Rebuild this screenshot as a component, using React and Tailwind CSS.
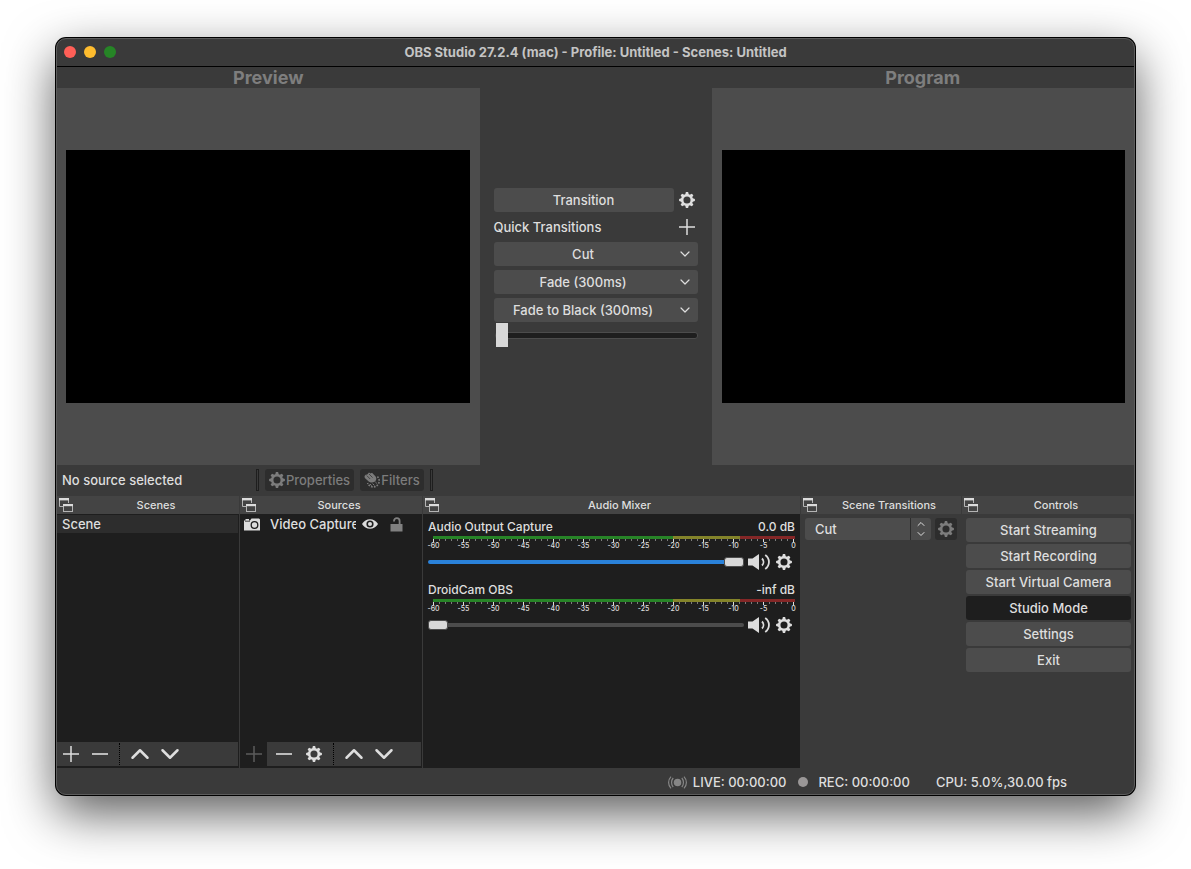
import { useState } from "react";
import { ChevronDown, ChevronUp } from "lucide-react";

const TEETH = [0, 45, 90, 135, 180, 225, 270, 315];
const TICKS = Array.from({ length: 61 }, (_, i) => i);
const DB_LABELS = ["-60", "-55", "-50", "-45", "-40", "-35", "-30", "-25", "-20", "-15", "-10", "-5", "0"];
const CONTROLS = ["Start Streaming", "Start Recording", "Start Virtual Camera", "Studio Mode", "Settings", "Exit"];

/* ICONS */
function GearIcon() {
  return (
    <svg width="16" height="16" viewBox="0 0 16 16" className="shrink-0" aria-hidden="true">
      <circle cx="8" cy="8" r="4.8" fill="none" stroke="currentColor" strokeWidth="2.5" />
      {TEETH.map((a) => (
        <path key={a} d="M6.1 3 L6.9 0.1 H9.1 L9.9 3 Z" fill="currentColor" transform={`rotate(${a} 8 8)`} />
      ))}
    </svg>
  );
}

function PlusIcon() {
  return (
    <svg width="16" height="16" viewBox="0 0 16 16" className="shrink-0" aria-hidden="true">
      <path d="M0 8 H16 M8 0 V16" stroke="currentColor" strokeWidth="1.5" />
    </svg>
  );
}

function MinusIcon() {
  return (
    <svg width="16" height="16" viewBox="0 0 16 16" className="shrink-0" aria-hidden="true">
      <path d="M0 8 H16" stroke="currentColor" strokeWidth="1.6" />
    </svg>
  );
}

function DockIcon() {
  return (
    <svg width="14" height="14" viewBox="0 0 14 14" className="shrink-0" aria-hidden="true">
      <path d="M0.5 1 V8.5 H4 M9.5 1 V5" fill="none" stroke="#b4b4b4" />
      <rect x="0" y="0" width="10" height="2.4" fill="#dcdcdc" />
      <rect x="4.5" y="6.5" width="9" height="7" fill="#444444" stroke="#b4b4b4" />
      <rect x="4" y="6" width="10" height="2.2" fill="#dcdcdc" />
    </svg>
  );
}

function FilterIcon() {
  return (
    <svg width="16" height="16" viewBox="0 0 16 16" className="shrink-0" aria-hidden="true">
      <path
        d="M0.5 4 L2 2.4 L3 2.8 L5 0.4 L6.6 1.6 L8 0.8 L11.4 4.2 C13 6 12.4 8.8 10.4 9.8 C8.2 11 5.8 10.6 4.2 9 L0.8 6 Z"
        fill="currentColor"
      />
      <path d="M2.8 3.6 L6.2 7 M5 2 L8.6 5.6" stroke="#2d2d2d" strokeWidth="0.7" />
      <path
        d="M13.4 4.6 A6 6 0 1 1 3.6 11"
        fill="none"
        stroke="currentColor"
        strokeWidth="1.6"
        strokeDasharray="1.7 1.2"
      />
      <path d="M6 12 L7.6 13.6 M8.6 11.6 L10.4 13.4 M11.4 10 L12.8 11.4" stroke="currentColor" strokeWidth="1" />
    </svg>
  );
}

function CameraIcon() {
  return (
    <svg width="16" height="13" viewBox="0 0 16 13" className="shrink-0" aria-hidden="true">
      <path d="M0 2.5 H1.5 V1 H5 V2.5 H6 L7.5 0.5 H15 L16 1.5 V12.5 H0 Z" fill="#dcdcdc" />
      <path d="M1 3.2 H6" stroke="#1e1e1e" strokeWidth="0.8" />
      <circle cx="10.5" cy="7" r="3.3" fill="none" stroke="#1e1e1e" strokeWidth="1.3" />
    </svg>
  );
}

function EyeIcon() {
  return (
    <svg width="16" height="12" viewBox="0 0 16 12" aria-hidden="true">
      <path d="M0 6 C3.5 -0.4 12.5 -0.4 16 6 C12.5 12.4 3.5 12.4 0 6 Z" fill="#dcdcdc" />
      <circle cx="8" cy="6" r="3.6" fill="#1e1e1e" />
      <circle cx="8" cy="6" r="2" fill="#dcdcdc" />
    </svg>
  );
}

function UnlockIcon() {
  return (
    <svg width="13" height="15" viewBox="0 0 13 15" aria-hidden="true">
      <path d="M4 4.5 V4 C4 0.2 9.6 0.2 9.6 4 V8" fill="none" stroke="#808080" strokeWidth="1.8" />
      <rect x="0.5" y="7" width="12" height="7.5" fill="#808080" />
    </svg>
  );
}

function SpeakerIcon() {
  return (
    <svg width="22" height="16" viewBox="0 0 22 16" aria-hidden="true">
      <path d="M0 4.5 H4.5 L11 0 V16 L4.5 11.5 H0 Z" fill="#dcdcdc" />
      <path d="M14 4.5 C16 6.5 16 9.5 14 11.5" fill="none" stroke="#dcdcdc" strokeWidth="1.8" />
      <path d="M17.2 1 C22.2 4.6 22.2 11.4 17.2 15" fill="none" stroke="#dcdcdc" strokeWidth="1.8" />
    </svg>
  );
}

function LiveIcon() {
  return (
    <svg width="19" height="13" viewBox="0 0 19 13" fill="none" stroke="#868686" strokeWidth="1.2" aria-hidden="true">
      <circle cx="9.5" cy="6.5" r="3.2" fill="#868686" />
      <path d="M5.2 2 C3 4.5 3 8.5 5.2 11 M13.8 2 C16 4.5 16 8.5 13.8 11" />
      <path d="M3 0.6 C-0.2 4 -0.2 9 3 12.4 M16 0.6 C19.2 4 19.2 9 16 12.4" />
    </svg>
  );
}

/* PARTS */
function Dock({ title, className = "", children }) {
  return (
    <section className={`flex min-w-0 flex-col ${className}`}>
      <header className="flex h-[18px] items-center bg-[#444444] pl-0.5 text-[11px] leading-4 font-medium">
        <DockIcon />
        <h2 className="flex-1 text-center">{title}</h2>
      </header>
      {children}
    </section>
  );
}

function ToolButton({ label, className = "w-[30px]", children, ...rest }) {
  return (
    <button aria-label={label} className={`flex h-6 items-center justify-center ${className}`} {...rest}>
      {children}
    </button>
  );
}

function ToolDivider() {
  return <span className="my-px mr-[5px] ml-1 w-px self-stretch border-l border-dotted border-black" />;
}

function QuickTransition({ name }) {
  return (
    <button className="flex h-6 items-center rounded-[3px] bg-[#4c4c4c] pr-[5px]">
      <span className="flex-1 pr-1 text-center">{name}</span>
      <ChevronDown size={16} strokeWidth={1.8} />
    </button>
  );
}

function MixerChannel({ name, level, initial }) {
  const [volume, setVolume] = useState(initial);

  return (
    <div className="flex flex-col">
      <div className="flex h-[22px] items-center justify-between pt-[3px] text-[12px]">
        <span>{name}</span>
        <span>{level}</span>
      </div>

      {/* METER */}
      <div className="ml-[5px]">
        <div className="flex h-[3px]">
          <div className="flex-[240] bg-[#278427]" />
          <div className="flex-[67] bg-[#84842a]" />
          <div className="flex-[55] bg-[#842727]" />
        </div>
        <div className="mr-px flex h-[3px] items-start justify-between">
          {TICKS.map((t) => (
            <span key={t} className={t % 5 === 0 ? "h-[3px] w-px bg-[#dcdcdc]" : "h-0.5 w-px bg-[#7c7c7c]"} />
          ))}
        </div>
        <div className="mr-px flex h-1.5 items-center justify-between text-[7px] leading-none">
          {DB_LABELS.map((l) => (
            <span key={l} className="flex w-px justify-center">
              <span>{l}</span>
            </span>
          ))}
        </div>
      </div>

      <div className="mb-0.5 flex h-[27px] items-center">
        <input
          type="range"
          min="0"
          max="100"
          value={volume}
          onChange={(e) => setVolume(Number(e.target.value))}
          aria-label={`${name} volume`}
          className="h-4 min-w-0 flex-1 appearance-none bg-transparent [&::-webkit-slider-runnable-track]:h-1 [&::-webkit-slider-runnable-track]:rounded-sm [&::-webkit-slider-runnable-track]:bg-[linear-gradient(to_right,#2a82da_var(--fill),#4c4c4c_var(--fill))] [&::-webkit-slider-thumb]:-mt-[3px] [&::-webkit-slider-thumb]:h-2.5 [&::-webkit-slider-thumb]:w-5 [&::-webkit-slider-thumb]:appearance-none [&::-webkit-slider-thumb]:rounded-[3px] [&::-webkit-slider-thumb]:border [&::-webkit-slider-thumb]:border-[#4c4c4c] [&::-webkit-slider-thumb]:bg-[#d8d8d8]"
          style={{ "--fill": `${volume}%` }}
        />
        <button aria-label={`Mute ${name}`} className="ml-1">
          <SpeakerIcon />
        </button>
        <button aria-label={`${name} settings`} className="mr-[3px] ml-1.5">
          <GearIcon />
        </button>
      </div>
    </div>
  );
}

export default function App() {
  const [studioMode, setStudioMode] = useState(true);
  const [tbar, setTbar] = useState(0);

  return (
    <div className="min-h-screen bg-white px-14 py-[38px] font-['Inter','Liberation_Sans',sans-serif] text-[13px] leading-4 font-medium text-[#dedede]">
      <main className="overflow-hidden rounded-[10px] border border-[#5c5c5c] bg-[#3a3a3a] shadow-[0_0_0_1px_#000,0_18px_50px_rgba(0,0,0,0.65)]">
        {/* TITLE BAR */}
        <div className="grid h-7 grid-cols-[1fr_auto_1fr] items-center border-b border-black pb-px">
          <div className="flex gap-2 pl-[7px]">
            <button aria-label="Close" className="size-3 rounded-full bg-[#ff5f57]" />
            <button aria-label="Minimize" className="size-3 rounded-full bg-[#febc2e]" />
            <button aria-label="Zoom" className="size-3 rounded-full bg-[#268526]" />
          </div>
          <h1 className="font-bold text-[#c4c4c4]">OBS Studio 27.2.4 (mac) - Profile: Untitled - Scenes: Untitled</h1>
        </div>

        {/* PREVIEW / PROGRAM */}
        <div className="grid grid-cols-[1fr_232px_1fr]">
          <section className="flex flex-col">
            <h2 className="h-[21px] text-center text-[18px] leading-[21px] font-bold text-[#7e7e7e]">Preview</h2>
            <div className="flex min-h-[377px] items-center bg-[#4c4c4c] pr-2.5 pl-[9px]">
              <div className="aspect-[16/10] w-full bg-black" />
            </div>
          </section>

          <section className="flex flex-col justify-center gap-1 px-3.5 pt-1">
            <div className="flex items-center gap-[5px]">
              <button className="h-6 flex-1 rounded-[3px] bg-[#4c4c4c]">Transition</button>
              <button aria-label="Transition settings" className="mr-[3px]">
                <GearIcon />
              </button>
            </div>
            <div className="flex h-[22px] items-center justify-between">
              <span>Quick Transitions</span>
              <button aria-label="Add quick transition" className="mr-[3px]">
                <PlusIcon />
              </button>
            </div>
            <QuickTransition name="Cut" />
            <QuickTransition name="Fade (300ms)" />
            <QuickTransition name="Fade to Black (300ms)" />
            <input
              type="range"
              min="0"
              max="100"
              value={tbar}
              onChange={(e) => setTbar(Number(e.target.value))}
              aria-label="Transition position"
              className="-mt-1 ml-px h-[26px] appearance-none bg-transparent [&::-webkit-slider-runnable-track]:h-[7px] [&::-webkit-slider-runnable-track]:rounded-[3px] [&::-webkit-slider-runnable-track]:border [&::-webkit-slider-runnable-track]:border-[#4c4c4c] [&::-webkit-slider-runnable-track]:bg-[#1e1e1e] [&::-webkit-slider-thumb]:-mt-2.5 [&::-webkit-slider-thumb]:h-6 [&::-webkit-slider-thumb]:w-3 [&::-webkit-slider-thumb]:appearance-none [&::-webkit-slider-thumb]:bg-[#d8d8d8]"
            />
          </section>

          <section className="flex flex-col">
            <h2 className="h-[21px] text-center text-[18px] leading-[21px] font-bold text-[#7e7e7e]">Program</h2>
            <div className="flex min-h-[377px] items-center bg-[#4c4c4c] pr-[9px] pl-2.5">
              <div className="aspect-[16/10] w-full bg-black" />
            </div>
          </section>
        </div>

        {/* SOURCE TOOLBAR */}
        <div className="flex h-[31px] items-center pb-px pl-[5px]">
          <span className="w-[194px]">No source selected</span>
          <span className="h-[22px] w-[3px] border border-[#1e1e1e]" />
          <button disabled className="ml-1.5 flex h-[22px] w-[89px] items-center justify-center gap-px rounded-[3px] bg-[#2d2d2d] text-[#7c7c7c]">
            <GearIcon />
            Properties
          </button>
          <button disabled className="ml-1.5 flex h-[22px] w-16 items-center justify-center gap-px rounded-[3px] bg-[#2d2d2d] text-[#7c7c7c]">
            <FilterIcon />
            Filters
          </button>
          <span className="ml-1.5 h-[22px] w-[3px] border border-[#1e1e1e]" />
        </div>

        {/* DOCKS */}
        <div className="grid min-h-[272px] grid-cols-[183fr_183fr_377fr_162fr_172fr]">
          <Dock title="Scenes" className="border-r border-[#3a3a3a] bg-[#1e1e1e]">
            <ul className="flex-1 pt-px">
              <li className="mr-px flex h-[18px] items-center bg-[#2d2d2d] pl-[5px]">Scene</li>
            </ul>
            <div className="mr-px mb-0.5 flex items-center bg-[#3a3a3a]">
              <ToolButton label="Add scene" className="mr-px w-[27px]">
                <PlusIcon />
              </ToolButton>
              <ToolButton label="Remove scene">
                <MinusIcon />
              </ToolButton>
              <ToolDivider />
              <ToolButton label="Move scene up">
                <ChevronUp size={30} strokeWidth={2} />
              </ToolButton>
              <ToolButton label="Move scene down">
                <ChevronDown size={30} strokeWidth={2} />
              </ToolButton>
            </div>
          </Dock>

          <Dock title="Sources" className="border-r border-[#3a3a3a] bg-[#1e1e1e]">
            <ul className="flex-1 pt-px">
              <li className="flex h-[18px] items-center pl-1">
                <CameraIcon />
                <span className="ml-2.5 w-[86px] overflow-hidden whitespace-nowrap">Video Capture</span>
                <button aria-label="Toggle visibility" className="ml-1.5">
                  <EyeIcon />
                </button>
                <button aria-label="Toggle lock" className="ml-3">
                  <UnlockIcon />
                </button>
              </li>
            </ul>
            <div className="mr-px mb-0.5 flex items-center bg-[#3a3a3a]">
              <ToolButton label="Add source" className="mr-0.5 w-[27px] bg-[#1e1e1e] text-[#5c5c5c]" disabled>
                <PlusIcon />
              </ToolButton>
              <ToolButton label="Remove source">
                <MinusIcon />
              </ToolButton>
              <ToolButton label="Source properties">
                <GearIcon />
              </ToolButton>
              <ToolDivider />
              <ToolButton label="Move source up">
                <ChevronUp size={30} strokeWidth={2} />
              </ToolButton>
              <ToolButton label="Move source down">
                <ChevronDown size={30} strokeWidth={2} />
              </ToolButton>
            </div>
          </Dock>

          <Dock title="Audio Mixer" className="bg-[#1e1e1e]">
            <div className="px-[5px]">
              <MixerChannel name="Audio Output Capture" level="0.0 dB" initial={100} />
              <MixerChannel name="DroidCam OBS" level="-inf dB" initial={0} />
            </div>
          </Dock>

          <Dock title="Scene Transitions" className="border-x border-[#3a3a3a]">
            <div className="flex gap-1 px-1 pt-1">
              <div className="relative flex-1">
                <select aria-label="Scene transition" className="h-[22px] w-full appearance-none rounded-[3px] bg-[#4c4c4c] pl-2.5">
                  <option>Cut</option>
                  <option>Fade</option>
                </select>
                <span className="pointer-events-none absolute inset-y-0 right-0 flex w-[21px] flex-col items-center justify-center border-l border-[#2d2d2d]">
                  <ChevronUp size={12} strokeWidth={2} className="-mb-0.5" />
                  <ChevronDown size={12} strokeWidth={2} />
                </span>
              </div>
              <button
                disabled
                aria-label="Scene transition settings"
                className="flex size-[22px] items-center justify-center rounded-[3px] bg-[#2d2d2d] text-[#7c7c7c]"
              >
                <GearIcon />
              </button>
            </div>
          </Dock>

          <Dock title="Controls">
            <div className="flex flex-col gap-0.5 pt-1 pr-[3px] pl-1">
              {CONTROLS.map((c) => {
                const active = c === "Studio Mode" && studioMode;
                return (
                  <button
                    key={c}
                    onClick={() => c === "Studio Mode" && setStudioMode(!studioMode)}
                    className={`h-6 rounded-[3px] ${active ? "bg-[#1e1e1e]" : "bg-[#4c4c4c]"}`}
                  >
                    {c}
                  </button>
                );
              })}
            </div>
          </Dock>
        </div>

        {/* STATUS BAR */}
        <footer className="flex h-[26px] items-center justify-end pt-0.5 pr-[67px]">
          <LiveIcon />
          <span className="ml-1.5">LIVE: 00:00:00</span>
          <span className="ml-3 size-2.5 rounded-full bg-[#9a9797]" />
          <span className="ml-2.5">REC: 00:00:00</span>
          <span className="ml-[26px]">CPU: 5.0%,30.00 fps</span>
        </footer>
      </main>
    </div>
  );
}
